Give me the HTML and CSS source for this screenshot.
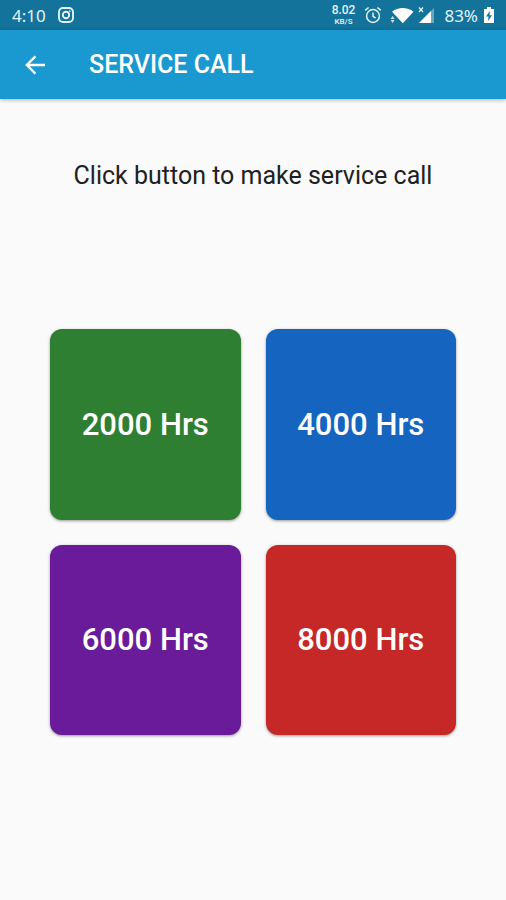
FILE: index.html
```html
<!DOCTYPE html>
<html lang="en">
<head>
  <meta charset="UTF-8" />
  <meta name="viewport" content="width=device-width, initial-scale=1.0"/>
  <title>Service Call</title>
  <link rel="stylesheet" href="styles.css">
</head>
<body>

<!-- Status bar -->
<div class="status-bar">
  <span class="time">4:10</span>
  <svg class="icon-insta" width="16" height="16" viewBox="0 0 16 16" fill="none" stroke="currentColor" stroke-width="1.9">
    <rect x="1" y="1" width="14" height="14" rx="4"/>
    <circle cx="8" cy="8" r="3.2"/>
    <circle cx="11.8" cy="4.2" r="0.5" stroke-width="1"/>
  </svg>
  <div class="status-right">
    <div class="net-speed"><span>8.02</span><small>KB/S</small></div>
    <svg class="icon-alarm" width="18" height="18" viewBox="0 0 18 18" fill="none" stroke="currentColor" stroke-width="1.5">
      <circle cx="9" cy="10" r="6.4"/>
      <path d="M9 6.4V10.3L11.6 12M1.2 4.4L4.6 1.5M16.8 4.4L13.4 1.5"/>
    </svg>
    <svg class="icon-wifi" width="24" height="18" viewBox="0 0 24 18" fill="currentColor">
      <path d="M2 5.8C8 0.8 17.5 0.8 23.5 5.8L12.8 17.2Z"/>
      <path d="M2.6 10L4.6 13H0.6ZM0.6 14H4.6L2.6 17Z" opacity="0.8"/>
    </svg>
    <svg class="icon-signal" width="17" height="18" viewBox="0 0 17 18">
      <path d="M16 2V17H1Z" fill="currentColor" opacity="0.4"/>
      <path d="M13 5V17H1Z" fill="#fff"/>
      <path d="M1 1.5L5 6M5 1.5L1 6" stroke="currentColor" stroke-width="1.3"/>
    </svg>
    <span class="battery">83%</span>
    <svg class="icon-battery" width="10" height="16" viewBox="0 0 10 16">
      <path d="M3 0H7V2H10V16H0V2H3Z" fill="currentColor"/>
      <path d="M6 3.8L2 9.4H4.5L4 14L8 8.2H5.5Z" fill="#15719a"/>
    </svg>
  </div>
</div>

<!-- App bar -->
<header class="app-bar">
  <button type="button" class="back-btn" aria-label="Back">
    <svg width="20" height="20" viewBox="0 0 20 20" fill="none" stroke="currentColor" stroke-width="2.3">
      <path d="M20 10H2M10.4 1.4L1.8 10L10.4 18.6"/>
    </svg>
  </button>
  <h1>SERVICE CALL</h1>
</header>

<main class="container">
  <p class="message">Click button to make service call</p>
  <div class="grid">
    <button type="button" class="tile green">2000 Hrs</button>
    <button type="button" class="tile blue">4000 Hrs</button>
    <button type="button" class="tile purple">6000 Hrs</button>
    <button type="button" class="tile red">8000 Hrs</button>
  </div>
</main>

</body>
</html>
```
FILE: styles.css
```css
body { margin: 0; font-family: Roboto, sans-serif; background: #fafafa; min-height: 100vh; }
.status-bar { display: flex; align-items: center; height: 30px; padding: 0 12px; box-sizing: border-box; background: #13739b; color: #e3f4fa; font-family: "Noto Sans", sans-serif; font-size: 17px; }
.icon-insta { margin-left: 12px; }
.status-right { display: flex; align-items: center; margin-left: auto; }
.net-speed { display: flex; flex-direction: column; align-items: center; font-family: Roboto, sans-serif; font-size: 12px; line-height: 14px; font-weight: 500; }
.net-speed small { font-size: 8px; line-height: 10px; }
.icon-alarm { margin-left: 9px; }
.icon-wifi { margin-left: 8px; color: #fff; }
.icon-signal { margin-left: 4px; }
.battery { margin-left: 9px; }
.icon-battery { margin-left: 6px; color: #fff; }
.app-bar { display: flex; align-items: center; height: 69px; background: #1a99d0; color: #fff; box-shadow: 0 1px 4px rgba(0,0,0,0.3); }
.back-btn { display: flex; margin: 0 34px 0 15px; padding: 10px; border: none; background: none; color: inherit; cursor: pointer; }
h1 { margin: 0; font-size: 25px; font-weight: 500; }
.container { padding: 60px 50px; }
.message { margin: 0; font-size: 25px; line-height: 34px; text-align: center; color: #212121; }
.grid { display: grid; grid-template-columns: 1fr 1fr; gap: 25px; margin-top: 136px; }
.tile { aspect-ratio: 1; padding: 0; border: none; border-radius: 12px; color: #fff; font-family: inherit; font-size: 31px; font-weight: 500; box-shadow: 0 1px 3px rgba(0,0,0,0.4); cursor: pointer; }
.green { background: #2f7f33; }
.blue { background: #1565c0; }
.purple { background: #6a1b9a; }
.red { background: #c62828; }
```
